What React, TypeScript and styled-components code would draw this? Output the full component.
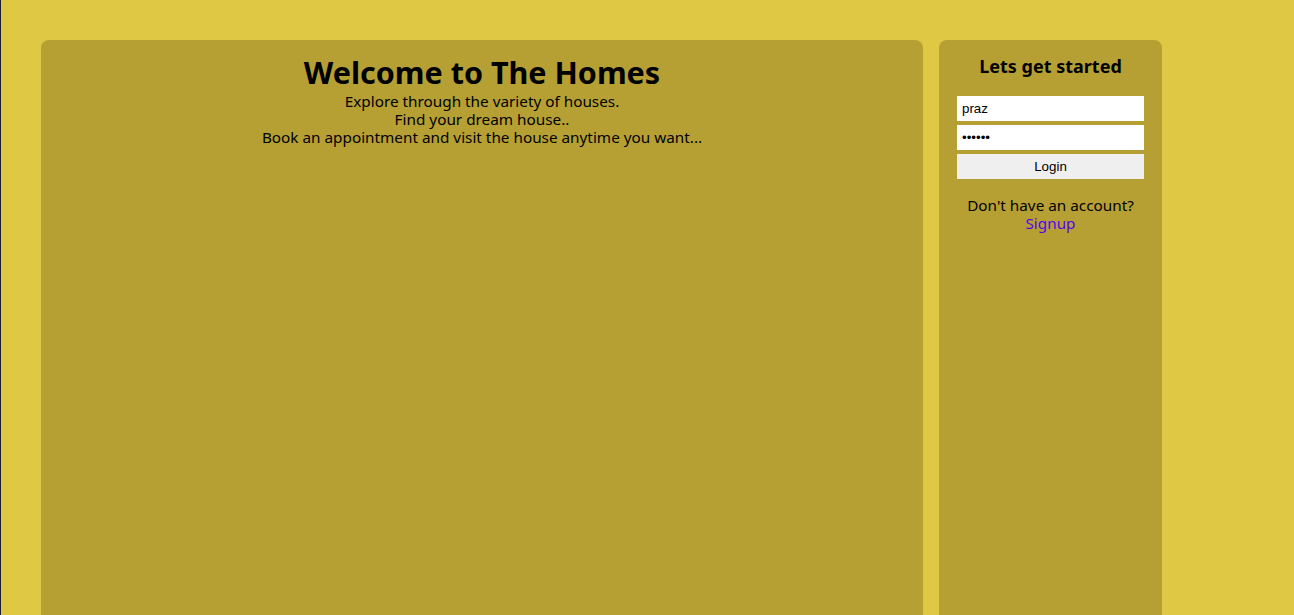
import React from "react";
import styled, { createGlobalStyle } from "styled-components";

const Global = createGlobalStyle`
  html, body { margin: 0; padding: 0; }
  body {
    background: #dfc843;
    font-family: "Noto Sans", "Open Sans", sans-serif;
    overflow: hidden;
  }
`;

const Page = styled.div`
  box-sizing: border-box;
  height: 100vh;
  border-left: 1px solid #1c1f2e;
  padding: 40px 0 0 40px;
  display: flex;
  align-items: flex-start;
  gap: 16px;
  overflow: hidden;
`;

const Panel = styled.section<{ $width: number }>`
  box-sizing: border-box;
  width: ${(p) => p.$width}px;
  height: calc(100vh);
  background: #b6a033;
  border-radius: 8px;
  flex-shrink: 0;
`;

const Hero = styled(Panel)`
  padding-top: 13px;
  text-align: center;
  color: #000;
`;

const Title = styled.h1`
  margin: 0;
  font-size: 30.5px;
  line-height: 39px;
  font-weight: 700;
`;

const Line = styled.p`
  margin: 0;
  font-size: 15.3px;
  line-height: 18px;
`;

const Side = styled(Panel)`
  padding: 14px 18px 0;
  display: flex;
  flex-direction: column;
  align-items: stretch;
  text-align: center;
`;

const SideTitle = styled.h2`
  margin: 0 0 18px;
  font-size: 18px;
  line-height: 24px;
  font-weight: 700;
`;

const Form = styled.form`
  display: flex;
  flex-direction: column;
  gap: 4px;
`;

const Field = styled.input`
  box-sizing: border-box;
  height: 25px;
  width: 100%;
  border: none;
  outline: none;
  background: #fff;
  padding: 0 5px;
  font-family: "Liberation Sans", Arial, sans-serif;
  font-size: 13.33px;
  color: #000;
  caret-color: #000;
`;

const Button = styled.button`
  box-sizing: border-box;
  height: 25px;
  width: 100%;
  border: none;
  background: #efefef;
  font-family: "Liberation Sans", Arial, sans-serif;
  font-size: 13.33px;
  color: #000;
`;

const Note = styled.p`
  margin: 17px 0 0;
  font-size: 15.3px;
  line-height: 18px;
`;

const Link = styled.a`
  color: #5500ee;
  text-decoration: none;
`;

export default function App() {
  return (
    <>
      <Global />
      <Page>
        <Hero $width={882}>
          <Title>Welcome to The Homes</Title>
          <Line>Explore through the variety of houses.</Line>
          <Line>Find your dream house..</Line>
          <Line>Book an appointment and visit the house anytime you want...</Line>
        </Hero>
        <Side $width={223}>
          <SideTitle>Lets get started</SideTitle>
          <Form onSubmit={(e) => e.preventDefault()}>
            <Field type="text" defaultValue="praz" />
            <Field type="password" defaultValue="secret" autoFocus />
            <Button type="submit">Login</Button>
          </Form>
          <Note>
            Don't have an account?
            <br />
            <Link href="#">Signup</Link>
          </Note>
        </Side>
      </Page>
    </>
  );
}
